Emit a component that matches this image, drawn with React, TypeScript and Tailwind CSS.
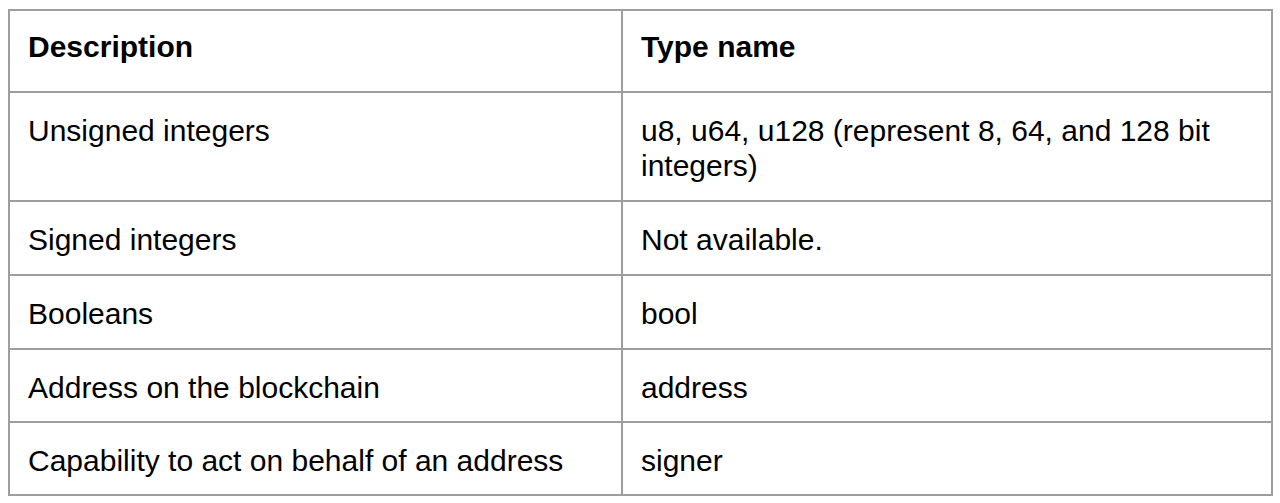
import React from 'react';

const rows: { desc: string; type: string; h: string }[] = [
    { desc: 'Unsigned integers', type: 'u8, u64, u128 (represent 8, 64, and 128 bit integers)', h: 'h-[109px]' },
    { desc: 'Signed integers', type: 'Not available.', h: 'h-[74px]' },
    { desc: 'Booleans', type: 'bool', h: 'h-[74px]' },
    { desc: 'Address on the blockchain', type: 'address', h: 'h-[73px]' },
    { desc: 'Capability to act on behalf of an address', type: 'signer', h: 'h-[73px]' },
];

export default function App() {
    return (
        <div className="h-[503px] w-[1280px] bg-white pl-[8px] pt-[9px] font-['Liberation_Sans',Arial,sans-serif] text-[30px] leading-[34.5px] text-black">
            <div className="w-[1265px] border-2 border-[#9e9e9e]">
                <div className="grid h-[80px] grid-cols-[613px_1fr] font-bold">
                    <div className="border-r-2 border-[#9e9e9e] px-[18px] pt-[19px]">Description</div>
                    <div className="px-[18px] pt-[19px]">Type name</div>
                </div>
                {rows.map((row) => (
                    <Row key={row.desc} desc={row.desc} type={row.type} h={row.h} />
                ))}
            </div>
        </div>
    );
}

function Row({ desc, type, h }: { desc: string; type: string; h: string }) {
    return (
        <div className={`grid grid-cols-[613px_1fr] border-t-2 border-[#9e9e9e] ${h}`}>
            <div className="border-r-2 border-[#9e9e9e] px-[18px] pt-[21px]">{desc}</div>
            <div className="pl-[18px] pr-[40px] pt-[21px]">{type}</div>
        </div>
    );
}
